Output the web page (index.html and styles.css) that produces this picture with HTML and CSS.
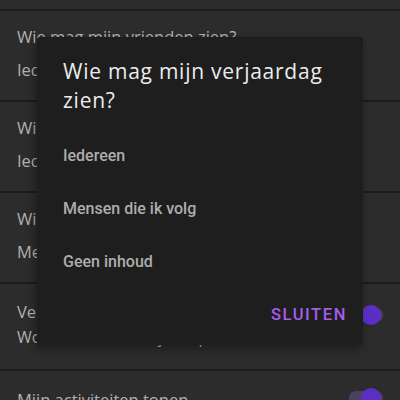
FILE: index.html
```html
<!DOCTYPE html>
<html lang="nl">
<head>
<meta charset="utf-8">
<link rel="stylesheet" href="styles.css">
</head>
<body>
<div class="list">
  <div class="top"></div>
  <div class="row">
    <div class="r-title">Wie mag mijn vrienden zien?</div>
    <div class="r-sub">Iedereen</div>
  </div>
  <div class="row">
    <div class="r-title">Wie mag mijn volgers zien?</div>
    <div class="r-sub">Iedereen</div>
  </div>
  <div class="row">
    <div class="r-title">Wie mag mijn verjaardag zien?</div>
    <div class="r-sub">Mensen die ik volg</div>
  </div>
  <div class="row row-toggle row-bday">
    <div class="r-text">
      <div class="r-title">Verjaardag tonen</div>
      <div class="r-sub">Wordt zichtbaar in jouw profiel</div>
    </div>
    <div class="switch"><span class="thumb"></span></div>
  </div>
  <div class="row row-toggle row-act">
    <div class="r-text">
      <div class="r-title">Mijn activiteiten tonen</div>
    </div>
    <div class="switch"><span class="thumb"></span></div>
  </div>
</div>
<div class="dialog">
  <div class="d-title">Wie mag mijn verjaardag zien?</div>
  <div class="options">
    <div class="opt">Iedereen</div>
    <div class="opt">Mensen die ik volg</div>
    <div class="opt">Geen inhoud</div>
  </div>
  <div class="actions"><span class="btn">SLUITEN</span></div>
</div>
</body>
</html>
```
FILE: styles.css
```css
html, body {
  margin: 0;
  padding: 0;
  width: 400px;
  height: 400px;
  overflow: hidden;
  background: #2c2c2c;
}
.list {
  display: flex;
  flex-direction: column;
}
.top {
  height: 9px;
  border-bottom: 2px solid #1c1c1c;
}
.row {
  flex: none;
  height: 89px;
  border-bottom: 2px solid #1c1c1c;
  padding: 0 17px;
  display: flex;
  flex-direction: column;
  font-family: "Open Sans", sans-serif;
  color: #b2b2b2;
}
.r-title {
  font-size: 16.5px;
  line-height: 20px;
  margin-top: 16px;
  white-space: nowrap;
}
.r-sub {
  font-size: 16.5px;
  line-height: 20px;
  margin-top: 13px;
  white-space: nowrap;
}
.row-toggle {
  flex-direction: row;
  justify-content: space-between;
}
.row-bday {
  height: 85px;
}
.row-bday .r-title { margin-top: 18px; }
.row-bday .r-sub { margin-top: 5px; font-size: 16px; }
.row-act .r-title { margin-top: 19px; }
.switch {
  position: relative;
  flex: none;
  width: 34px;
  height: 14px;
  border-radius: 7px;
  background: #4a4160;
}
.row-bday .switch { margin-top: 24px; }
.row-act .switch { margin-top: 20px; }
.thumb {
  position: absolute;
  right: 2px;
  top: -3px;
  width: 20px;
  height: 20px;
  border-radius: 50%;
  background: #5b2fc6;
}
.dialog {
  position: absolute;
  left: 37px;
  top: 37px;
  width: 326px;
  height: 308px;
  background: #1e1e1e;
  border-radius: 3px;
  box-shadow: -2px 4px 10px rgba(0,0,0,0.35);
  display: flex;
  flex-direction: column;
  box-sizing: border-box;
  padding: 0 17px 0 26px;
}
.d-title {
  font-family: "Open Sans", sans-serif;
  font-size: 21px;
  letter-spacing: 0.75px;
  line-height: 29px;
  color: #ececec;
  margin-top: 20px;
}
.options {
  margin-top: 14px;
  display: flex;
  flex-direction: column;
}
.opt {
  height: 53px;
  display: flex;
  align-items: center;
  font-family: Roboto, sans-serif;
  font-weight: 500;
  font-size: 16px;
  color: #adadad;
}
.actions {
  margin-top: auto;
  margin-bottom: 19px;
  display: flex;
  justify-content: flex-end;
}
.btn {
  font-family: Roboto, sans-serif;
  font-weight: 500;
  font-size: 16.5px;
  letter-spacing: 1.6px;
  color: #a55ded;
  line-height: 22px;
  margin-right: -1px;
}
```
